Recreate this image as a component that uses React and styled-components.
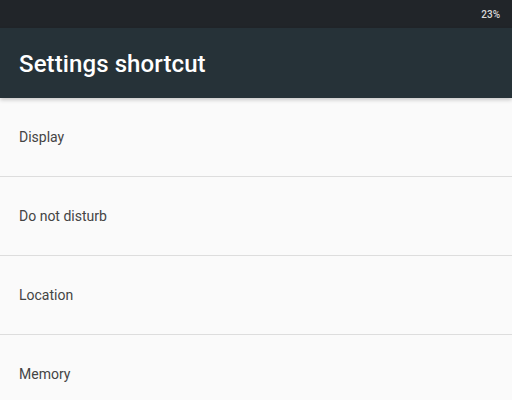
import React from 'react';
import styled, { createGlobalStyle } from 'styled-components'

const GlobalStyle = createGlobalStyle`
  html, body {
    margin: 0;
    padding: 0;
    background: #fafafa;
    font-family: Roboto, "Noto Sans", sans-serif;
  }
`

const Page = styled.div`
  width: 512px;
  height: 400px;
  overflow: hidden;
  background: #fafafa;
`

const StatusBar = styled.div`
  height: 28px;
  background: #212529;
  display: flex;
  justify-content: flex-end;
  align-items: center;
  padding: 0 12px;
  color: #d8d8d8;
  font-size: 10px;
  font-weight: 500;
`

const Toolbar = styled.div`
  height: 70px;
  background: #263238;
  display: flex;
  align-items: center;
  padding: 0 19px;
  box-shadow: 0 2px 4px rgba(0, 0, 0, 0.2);
  position: relative;
  z-index: 1;
`

const Title = styled.h1`
  margin: 0;
  color: #ffffff;
  font-size: 24px;
  font-weight: 500;
  letter-spacing: 0.1px;
  margin-top: 2px;
`

const List = styled.div`
  display: flex;
  flex-direction: column;
`

const Row = styled.div`
  height: 78px;
  display: flex;
  align-items: center;
  padding: 0 19px;
  border-bottom: 1px solid #dddddd;
  color: #444444;
  font-size: 14px;
`

const items = ['Display', 'Do not disturb', 'Location', 'Memory']

const App = () => {
  return (
    <Page>
      <GlobalStyle />
      <StatusBar>23%</StatusBar>
      <Toolbar>
        <Title>Settings shortcut</Title>
      </Toolbar>
      <List>
        {items.map(item => <Row key={item}>{item}</Row>)}
      </List>
    </Page>
  );
}

export default App;
